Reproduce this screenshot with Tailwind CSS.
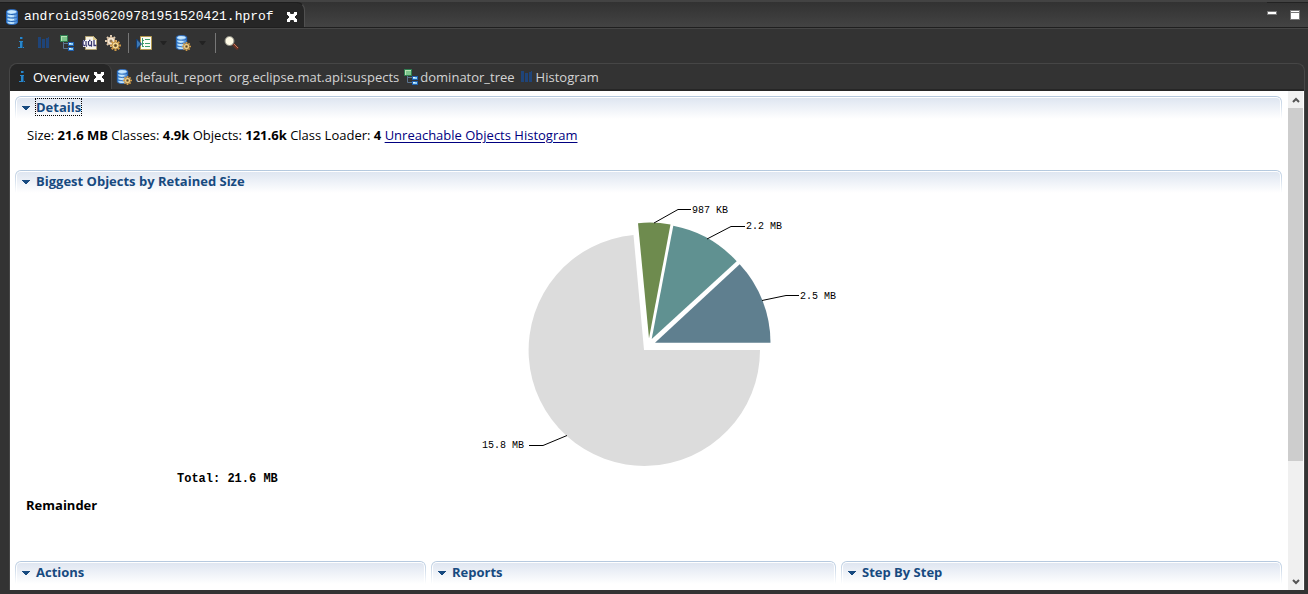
<!DOCTYPE html>
<html lang="en">
<head>
<meta charset="utf-8">
<meta name="viewport" content="width=device-width, initial-scale=1">
<title>android3506209781951520421.hprof</title>
<script src="https://cdn.jsdelivr.net/npm/@tailwindcss/browser@4"></script>
</head>
<body class="flex h-screen flex-col overflow-hidden bg-[#333333] font-['Open_Sans',sans-serif] text-[13px] leading-5 text-black">
<svg class="absolute size-0" aria-hidden="true">
  <defs>
    <linearGradient id="steel" x1="0" x2="1"><stop offset="0" stop-color="#4a9be8"/><stop offset=".4" stop-color="#b9e2fc"/><stop offset="1" stop-color="#3b80d4"/></linearGradient>
    <symbol id="info" viewBox="0 0 16 16"><path fill="#2a86c8" d="M7 2h3v2H7zM6 6h4v6h1v1H5v-1h2V7H6z"/><path fill="#14568f" d="M9 2h1v2H9zM9 7h1v6H9z"/></symbol>
    <symbol id="bars" viewBox="0 0 16 16"><path fill="#1f4478" d="M2 2h3v11H2zM6 4h3v9H6zM10 3h2V2h1v11h-3z"/></symbol>
    <symbol id="tree" viewBox="0 0 16 16"><path fill="none" stroke="#5c7590" d="M4.500 7v6.500H10M4.500 8.500H10"/><path fill="#2f7d51" d="M1 0h8v7H1z"/><path fill="#b9e5b5" d="M2 1h6v5H2z"/><path fill="#7cc58b" d="M3 2h5v4H3z"/><path fill="#1e5fae" d="M9 7h6v4H9zM9 12h6v4H9z"/><path fill="#8fd0f5" d="M10 8h4v2h-4zM10 13h4v2h-4z"/><path fill="#e2f5ff" d="M10 8h2v1h-2zM10 13h2v1h-2z"/></symbol>
    <symbol id="oql" viewBox="0 0 16 16"><path fill="#f7f4e6" stroke="#b0a071" d="M3.500 1.500h8l3 3v10h-11z"/><path fill="#d9c88d" d="M11 1v4h4z"/><path fill="#fff" d="M1 5h13v7H1z"/><path fill="none" stroke="#37366f" stroke-width="1.300" d="M1 6v4.500M1.500 5.500H3M1.500 10.500H3M4 6v4.500l1 1M6.500 6v4.500M7 5.500h1.500M9.500 6v4.500M7 10.500h2l1 1M12 5v5.500h2.500"/></symbol>
    <symbol id="gear" viewBox="0 0 16 16"><path stroke="#cf9a48" stroke-width="3" d="M8 0v16M0 8h16M2.500 2.500l11 11M13.500 2.500l-11 11"/><circle cx="8" cy="8" r="5" fill="#fbe6a8" stroke="#a87328"/><circle cx="8" cy="8" r="2.200" fill="#4c4336" stroke="#c08b34"/></symbol>
    <symbol id="gears" viewBox="0 0 16 16"><path stroke="#e0cdb4" stroke-width="2" d="M6 0v12M0 6h12M2 2l8 8M10 2l-8 8"/><circle cx="6" cy="6" r="4" fill="#f5e8d3" stroke="#c5aa8b"/><circle cx="6" cy="6" r="1.500" fill="#8f7558"/><use href="#gear" x="5" y="5" width="11" height="11"/></symbol>
    <symbol id="db" viewBox="0 0 16 16"><path fill="url(#steel)" stroke="#2868bd" d="M2.500 2.500c0-2.500 11-2.500 11 0v11c0 2.500-11 2.500-11 0z"/><ellipse cx="8" cy="2.700" rx="4.500" ry="1.300" fill="#c9e8ff"/><path fill="none" stroke="#2462b4" d="M2.500 4c1 2 10 2 11 0M2.500 7.500c1 2 10 2 11 0M2.500 11c1 2 10 2 11 0"/><path fill="none" stroke="#d4efff" d="M4 6.500c1 .5 4 1 6 .5M4 10c1 .5 4 1 6 .5M4 13.500c1 .5 4 1 6 .5"/></symbol>
    <symbol id="dbgear" viewBox="0 0 16 16"><use href="#db" x="-1" y="0" width="15" height="15"/><use href="#gear" x="7" y="7" width="9" height="9"/></symbol>
    <symbol id="run" viewBox="0 0 16 16"><path fill="#fcfdf5" stroke="#b49a4e" d="M4.500 1.500h11v13h-11z"/><path stroke="#3e9c6c" d="M9 4.500h5M9 8.500h5M9 11.500h5M6.500 3v9M6 5.500h2M6 8.500h2M6 11.500h2"/><path fill="#3c78b4" stroke="#143d70" d="M.5 4L5.500 9l-5 5z"/></symbol>
    <symbol id="search" viewBox="0 0 16 16"><path stroke="#6b3325" stroke-width="3" d="M10 9l5 5"/><path stroke="#c57b5d" d="M11 9l4 4"/><circle cx="6.500" cy="6" r="4.500" fill="#fffbe6" stroke="#8c8b81"/></symbol>
    <symbol id="close" viewBox="0 0 12 12"><path fill="#fff" d="M1 1h3v1h1v1h2V2h1V1h3v3h-1v1H9v2h1v1h1v3H8v-1H7V9H5v1H4v1H1V8h1V7h1V5H2V4H1z"/><path fill="#666" d="M4 2h1v1H4zM7 2h1v1H7zM4 9h1v1H4zM7 9h1v1H7z"/></symbol>
    <symbol id="twisty" viewBox="0 0 8 4"><path fill="#174a80" d="M0 0h8v1H7v1H6v1H5v1H3V3H2V2H1V1H0z"/></symbol>
    <symbol id="down" viewBox="0 0 9 5"><path fill="#222" d="M1 0h7L5 4H4z"/></symbol>
  </defs>
</svg>

<header class="flex h-7 shrink-0 items-stretch border-t-2 border-b border-t-[#434343] border-b-[#1f1f1f] bg-linear-to-b from-[#323232] to-[#434343]">
  <div class="flex items-center rounded-tr-lg border-t border-r border-t-[#1e1e1e] border-r-[#505050] bg-[#262626] pt-1 pr-1.5 pl-1 text-white">
    <button type="button" class="flex items-center gap-1 font-['Liberation_Mono',monospace] text-[13px]">
      <svg class="size-4"><use href="#db"/></svg>android3506209781951520421.hprof
    </button>
    <button type="button" aria-label="Close file" class="ml-3"><svg class="size-3"><use href="#close"/></svg></button>
  </div>
  <div class="ml-auto flex items-start gap-3 border-t border-[#222] pt-[7px] pr-2">
    <button type="button" aria-label="Minimize" class="mt-px mr-px h-1 w-2.5 border border-[#777] bg-white"></button>
    <button type="button" aria-label="Maximize" class="flex h-2.5 w-2.5 flex-col border border-[#777] bg-white"><span class="mt-px block h-px w-full bg-[#777]"></span></button>
  </div>
</header>

<div role="toolbar" aria-label="Heap dump tools" class="flex shrink-0 items-center gap-[7px] border-t border-[#464646] pt-1.5 pb-3 pl-[13px]">
  <button type="button" aria-label="Overview"><svg class="size-4"><use href="#info"/></svg></button>
  <button type="button" aria-label="Histogram"><svg class="size-4"><use href="#bars"/></svg></button>
  <button type="button" aria-label="Dominator tree"><svg class="size-4"><use href="#tree"/></svg></button>
  <button type="button" aria-label="Query language"><svg class="size-4"><use href="#oql"/></svg></button>
  <button type="button" aria-label="Thread overview"><svg class="size-4"><use href="#gears"/></svg></button>
  <span class="-my-1 h-5 w-px bg-[#777]"></span>
  <button type="button" aria-label="Run report"><svg class="size-4"><use href="#run"/></svg></button>
  <button type="button" aria-label="Report menu"><svg class="h-[5px] w-[9px]"><use href="#down"/></svg></button>
  <button type="button" aria-label="Query browser"><svg class="size-4"><use href="#dbgear"/></svg></button>
  <button type="button" aria-label="Query menu"><svg class="h-[5px] w-[9px]"><use href="#down"/></svg></button>
  <span class="-my-1 ml-px h-5 w-px bg-[#777]"></span>
  <button type="button" aria-label="Find"><svg class="size-4"><use href="#search"/></svg></button>
</div>

<div class="mr-[3px] mb-1 ml-[9px] flex min-h-0 flex-1 flex-col rounded-t-lg border border-b-0 border-[#464646]">
  <nav aria-label="Views" class="flex h-[27px] shrink-0 items-stretch border-b-2 border-[#262626] text-[#d4d4d4]">
    <div class="flex items-center rounded-t-lg border-r border-[#464646] bg-[#262626] pr-1.5 pl-1 text-white">
      <button type="button" class="flex items-center gap-[3px]"><svg class="size-4"><use href="#info"/></svg>Overview</button>
      <button type="button" aria-label="Close overview" class="ml-1"><svg class="size-3"><use href="#close"/></svg></button>
    </div>
    <button type="button" class="ml-1 flex items-center gap-[3px] whitespace-pre"><svg class="size-4"><use href="#dbgear"/></svg>default_report  org.eclipse.mat.api:suspects</button>
    <button type="button" class="ml-1 flex items-center gap-px"><svg class="size-4"><use href="#tree"/></svg>dominator_tree</button>
    <button type="button" class="ml-1 flex items-center gap-px"><svg class="size-4"><use href="#bars"/></svg>Histogram</button>
  </nav>

  <div class="flex min-h-0 flex-1 bg-white">
    <main class="min-w-0 flex-1 overflow-hidden pt-[5px] pr-1.5 pl-[5px]">
      <section class="h-[74px]">
        <h2 class="rounded-t-md bg-linear-to-b from-[#b4c8de] to-white px-px pt-px font-bold text-[#174a80]">
          <button type="button" class="flex h-[22px] w-full items-start gap-1.5 rounded-t-[5px] border border-b-0 border-white bg-linear-to-b from-[#dfe6f1] to-white pl-[5px]"><svg class="mt-2 h-1 w-2"><use href="#twisty"/></svg><span class="mt-px leading-4 outline outline-dotted outline-black">Details</span></button>
        </h2>
        <p class="mt-1.5 pl-3">Size: <b>21.6 MB</b> Classes: <b>4.9k</b> Objects: <b>121.6k</b> Class Loader: <b>4</b> <a href="#" class="text-[#000080] underline underline-offset-2">Unreachable Objects Histogram</a></p>
      </section>

      <section class="h-[391px]">
        <h2 class="rounded-t-md bg-linear-to-b from-[#b4c8de] to-white px-px pt-px font-bold text-[#174a80]">
          <button type="button" class="flex h-[22px] w-full items-start gap-1.5 rounded-t-[5px] border border-b-0 border-white bg-linear-to-b from-[#dfe6f1] to-white pl-[5px]"><svg class="mt-2 h-1 w-2"><use href="#twisty"/></svg><span class="mt-px leading-4">Biggest Objects by Retained Size</span></button>
        </h2>
        <svg class="mx-auto mt-[7px] block h-[270px] w-[401px] font-['Liberation_Mono',monospace] text-[10px]" viewBox="448 200 401 270" role="img" aria-label="Retained size by object">
          <path fill="#dcdcdc" d="M644 350H760A115.700 115.700 0 1 1 633.500 235z"/>
          <path fill="#5f7f8f" d="M655 342.700H770.500A115.500 115.500 0 0 0 739.700 264.300z"/>
          <path fill="#609191" d="M651.700 339L736.700 261.300A115.500 115.500 0 0 0 673.300 225.700z"/>
          <path fill="#6e8b4e" d="M649 338.300L670.500 224.500A115.500 115.500 0 0 0 638 223.200z"/>
          <path fill="none" stroke="#000" d="M654 223l24-13.500h13M707 239l24-12.500h14M762 300.500l24-5h13M567 435.500l-24 10h-14"/>
          <text x="692" y="213">987 KB</text>
          <text x="746" y="229">2.2 MB</text>
          <text x="800" y="299">2.5 MB</text>
          <text x="482" y="448">15.8 MB</text>
        </svg>
        <p class="mt-px pl-[162px] font-['Liberation_Mono',monospace] text-xs leading-4 font-bold">Total: 21.6 MB</p>
        <p class="mt-2 pl-[11px] font-bold">Remainder</p>
      </section>

      <div class="grid grid-cols-[411fr_405fr_441fr] gap-[5px] font-bold text-[#174a80]">
        <h2 class="rounded-t-md bg-linear-to-b from-[#b4c8de] to-white px-px pt-px"><button type="button" class="flex h-[22px] w-full items-start gap-1.5 rounded-t-[5px] border border-b-0 border-white bg-linear-to-b from-[#dfe6f1] to-white pl-[5px]"><svg class="mt-2 h-1 w-2"><use href="#twisty"/></svg><span class="mt-px leading-4">Actions</span></button></h2>
        <h2 class="rounded-t-md bg-linear-to-b from-[#b4c8de] to-white px-px pt-px"><button type="button" class="flex h-[22px] w-full items-start gap-1.5 rounded-t-[5px] border border-b-0 border-white bg-linear-to-b from-[#dfe6f1] to-white pl-[5px]"><svg class="mt-2 h-1 w-2"><use href="#twisty"/></svg><span class="mt-px leading-4">Reports</span></button></h2>
        <h2 class="rounded-t-md bg-linear-to-b from-[#b4c8de] to-white px-px pt-px"><button type="button" class="flex h-[22px] w-full items-start gap-1.5 rounded-t-[5px] border border-b-0 border-white bg-linear-to-b from-[#dfe6f1] to-white pl-[5px]"><svg class="mt-2 h-1 w-2"><use href="#twisty"/></svg><span class="mt-px leading-4">Step By Step</span></button></h2>
      </div>
    </main>
    <div class="flex w-4 shrink-0 flex-col border-r border-white bg-[#f0f0f0]">
      <button type="button" aria-label="Scroll up" class="flex h-[17px] items-center justify-center"><svg class="h-1.5 w-2" viewBox="0 0 8 6"><path fill="none" stroke="#555" stroke-width="2" d="M1 5l3-3 3 3"/></svg></button>
      <div class="flex-1"><div class="h-[76%] bg-[#cdcdcd]"></div></div>
      <button type="button" aria-label="Scroll down" class="flex h-[17px] items-center justify-center"><svg class="h-1.5 w-2" viewBox="0 0 8 6"><path fill="none" stroke="#555" stroke-width="2" d="M1 1l3 3 3-3"/></svg></button>
    </div>
  </div>
</div>
</body>
</html>
